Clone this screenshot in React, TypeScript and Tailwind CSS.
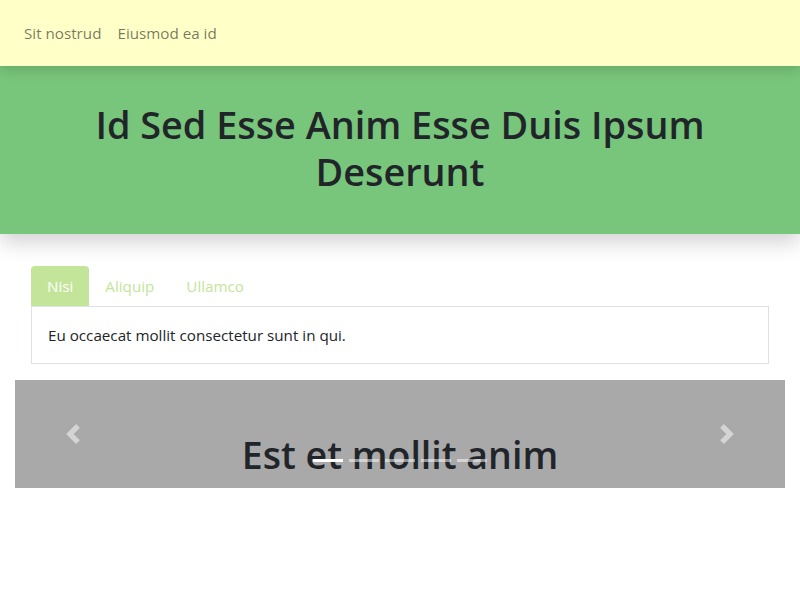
import { useState } from "react";

const tabs = [
  { id: "nisi", label: "Nisi", body: "Eu occaecat mollit consectetur sunt in qui." },
  { id: "aliquip", label: "Aliquip", body: "Aliquip ex ea commodo consequat." },
  { id: "ullamco", label: "Ullamco", body: "Ullamco laboris nisi ut aliquip." },
];

const slides = ["Est et mollit anim", "Duis aute irure", "Velit esse cillum", "Fugiat nulla", "Excepteur sint"];

function Chevron({ dir }: { dir: "left" | "right" }) {
  return (
    <svg width="20" height="20" viewBox="0 0 8 8" className="opacity-50">
      <path
        d={dir === "left" ? "M5.25 0l-4 4 4 4 1.5-1.5L4.25 4l2.5-2.5L5.25 0z" : "M2.75 0l-1.5 1.5L3.75 4l-2.5 2.5L2.75 8l4-4-4-4z"}
        fill="#fff"
      />
    </svg>
  );
}

export default function App() {
  const [active, setActive] = useState("nisi");
  const [slide, setSlide] = useState(0);
  const current = tabs.find((t) => t.id === active)!;

  return (
    <div className="min-h-screen bg-white text-[15.2px] text-[#212529] font-['Open_Sans',sans-serif]">
      {/* Navbar */}
      <nav className="relative z-20 flex h-[66px] items-center bg-[#ffffc8] px-4 shadow-[0_4px_12px_rgba(0,0,0,0.15)]">
        <a className="px-2 text-black/55">Sit nostrud</a>
        <a className="px-2 text-black/55">Eiusmod ea id</a>
      </nav>

      {/* Header */}
      <header className="relative z-10 flex h-[168px] items-center justify-center bg-[#78c67b] px-20 pb-[5px] shadow-[0_8px_20px_rgba(0,0,0,0.18)]">
        <h1 className="text-center text-[37.8px] font-semibold leading-[47px]">
          Id Sed Esse Anim Esse Duis Ipsum Deserunt
        </h1>
      </header>

      <main className="px-[15px]">
        {/* Tabs */}
        <section className="mt-8 px-4">
          <ul className="flex">
            {tabs.map((t) => (
              <li key={t.id}>
                <button
                  onClick={() => setActive(t.id)}
                  className={`h-10 rounded-t px-4 ${
                    active === t.id ? "bg-[#c3e59a] text-white" : "text-[#c3e59a]"
                  }`}
                >
                  {t.label}
                </button>
              </li>
            ))}
          </ul>
          <div className="border border-[#dee2e6] p-4 leading-6">{current.body}</div>
        </section>

        {/* Carousel */}
        <section className="relative mt-4 h-[108px] overflow-hidden bg-[#a9a9a9]">
          <button
            onClick={() => setSlide((slide + slides.length - 1) % slides.length)}
            className="absolute inset-y-0 left-0 flex w-[15%] items-center justify-center"
          >
            <Chevron dir="left" />
          </button>
          <button
            onClick={() => setSlide((slide + 1) % slides.length)}
            className="absolute inset-y-0 right-0 flex w-[15%] items-center justify-center"
          >
            <Chevron dir="right" />
          </button>
          <div className="absolute inset-x-[15%] top-[51px] text-center">
            <h2 className="text-[37.5px] font-semibold leading-[47px]">{slides[slide]}</h2>
          </div>
          <div className="absolute inset-x-0 bottom-[26px] flex justify-center">
            {slides.map((s, i) => (
              <button
                key={s}
                onClick={() => setSlide(i)}
                className={`mx-[3px] h-[3px] w-[30px] bg-white ${i === slide ? "opacity-100" : "opacity-50"}`}
              />
            ))}
          </div>
        </section>
      </main>
    </div>
  );
}
